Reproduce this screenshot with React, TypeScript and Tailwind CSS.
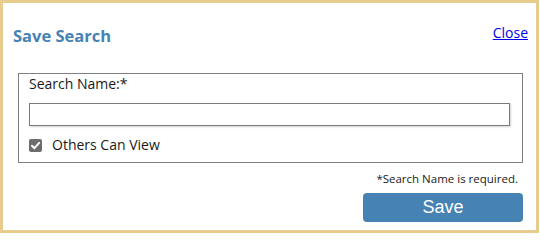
import * as React from "react";

/**
 * Save Search dialog
 */
function CheckMark() {
  return (
    <svg viewBox="0 0 13 13" className="h-[13px] w-[13px]">
      <path
        d="M3 6.8 L5.4 9.2 L10.2 3.9"
        fill="none"
        stroke="#ffffff"
        strokeWidth="2"
        strokeLinecap="round"
        strokeLinejoin="round"
      />
    </svg>
  );
}

export default function App() {
  const [name, setName] = React.useState("");
  const [othersCanView, setOthersCanView] = React.useState(true);

  return (
    <div
      className="h-[233px] w-[539px] border-[3px] border-[#e8cc8e] bg-white"
      style={{ fontFamily: '"Open Sans", "Noto Sans", sans-serif' }}
    >
      <div className="flex items-start justify-between pl-[10px] pr-[8px] pt-[20px]">
        <h2 className="mt-[2px] text-[16.5px] font-bold leading-[22px] text-[#4682b4]">
          Save Search
        </h2>
        <a href="#" className="text-[14px] leading-[20px] text-[#0000ee] underline">
          Close
        </a>
      </div>

      <div className="ml-[15px] mr-[13px] mt-[26px]">
        <div className="border border-[#808080] pb-[7px] pl-[10px] pr-[12px]">
          <div className="text-[14px] leading-[20px] text-[#1a1a1a]">Search Name:*</div>
          <input
            type="text"
            value={name}
            onChange={(e) => setName(e.target.value)}
            className="mt-[9px] block h-[23px] w-[481px] border border-[#7a7a7a] bg-white px-1 text-[14px] shadow-[1px_1px_2px_rgba(0,0,0,0.18)] outline-none"
          />
          <label className="mt-[9px] flex h-[20px] cursor-pointer items-center gap-[10px] text-[14px] leading-[20px] text-[#1a1a1a]">
            <span
              onClick={() => setOthersCanView(!othersCanView)}
              className={`flex h-[13px] w-[13px] items-center justify-center rounded-[2px] ${othersCanView ? "bg-[#6d6d6d]" : "border border-[#6d6d6d] bg-white"}`}
            >
              {othersCanView && <CheckMark />}
            </span>
            Others Can View
          </label>
        </div>

        <div className="mt-[8px] pr-[5px] text-right text-[11.5px] leading-[16px] text-[#1a1a1a]">
          *Search Name is required.
        </div>

        <div className="mt-[6px] flex justify-end">
          <button
            type="button"
            className="h-[29px] w-[160px] rounded-[4px] bg-[#4682b4] text-[18px] leading-[29px] text-white"
            style={{ fontFamily: '"Liberation Sans", Arial, sans-serif' }}
          >
            Save
          </button>
        </div>
      </div>
    </div>
  );
}
